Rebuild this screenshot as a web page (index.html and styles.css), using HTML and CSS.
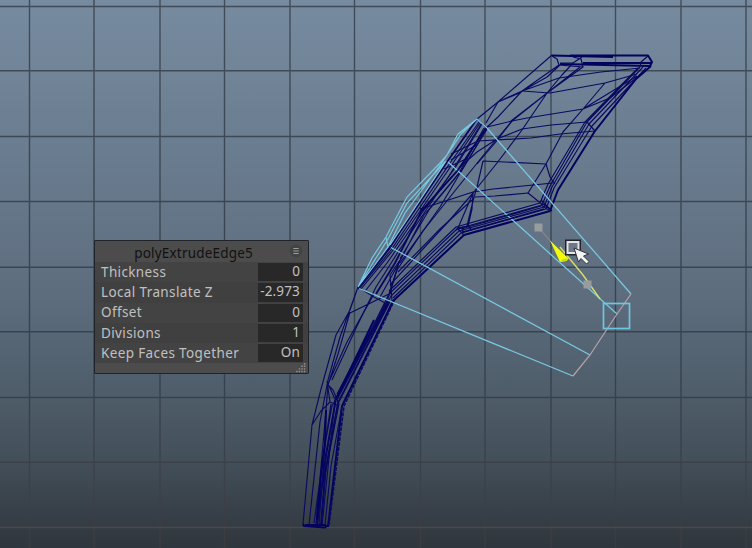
FILE: index.html
```html
<!DOCTYPE html>
<html lang="en">
<head>
<meta charset="utf-8">
<title>Viewport</title>
<link rel="stylesheet" href="styles.css">
</head>
<body>
<main class="viewport">
<svg class="scene" viewBox="0 0 752 548" width="752" height="548">
  <defs>
    <linearGradient id="fade" gradientUnits="userSpaceOnUse" x1="0" y1="0" x2="0" y2="548">
      <stop offset="0" stop-color="#414c58"/><stop offset=".7" stop-color="#35414d"/><stop offset=".88" stop-color="#3c4149"/><stop offset="1" stop-color="#3c3b3f"/>
    </linearGradient>
  </defs>
  <path class="grid" stroke="url(#fade)" d="M29.5 0V548M94 0V548M160 0V548M224.500 0V548M290 0V548M354.500 0V548M420.500 0V548M485 0V548M551 0V548M615.500 0V548M681 0V548M746 0V548M0 6.500H752M0 70.700H752M0 136.500H752M0 201.500H752M0 267.200H752M0 331.700H752M0 397.500H752M0 462.200H752"/>
  <path class="axis" d="M0 527.500H752"/>
  <g class="mesh">
    <path class="heavy" d="M552 55.500L613 57M570 55.500H648L652 62L650 66L560 64M583 63H651"/>
    <path d="M552 55L498 102L477 119M552 56L557 59L559 65L583 67L581 59L573 57M560 63L573 63L582 57M648 56L641 62L640 67"/>
    <path d="M559 65L522 91L498 117L486 128M498 102L522 91L559 78L601 72L640 68M498 102L517 94L547 77L560 65M498 102L486 123"/>
    <path d="M583 67L547 93L512 121L486 152L458 187L423 231L400 263M573 63L562 75L547 93L522 130L497 163L473 193L448 222L422 250L390 285M580 67L551 90L511 121"/>
    <path d="M522 91L550 93L605 83L637 74M605 83L583 109L563 132L546 164L528 193L543 205M583 109L527 118L512 121L487 127M583 109L637 76M583 109L610 98L640 75"/>
    <path d="M587 122L551 125L522 129L497 139L477 152L460 167M595 131L560 134L531 138L478 141L451 154M512 121L495 143L477 164M483 161L546 164L550 177L555 184M553 183L493 189L473 192L433 205L420 209M475 197L495 196L528 193M483 161L477 187L473 201L467 226M473 193L472 209L468 226M473 193L458 228M472 200L440 229L398 272"/>
    <path d="M640 67L587 122L550 186L542 205L457 229L390 293L386 303L335 400L322 526M643 67L589 124L552 187L544 207L459 231L391 296L387 304L337 400M646 68L592 126L554 188L546 209L461 233L393 298M638 68L585 122L548 184L540 203L456 227L389 291"/>
    <path class="heavy" d="M651 66L636 79L595 131L558 190L550 211L464 235L393 301L342 406L328 527"/>
    <path class="band" d="M477 119L447 162L390 247L358 287"/>
    <path class="band" d="M486 128L458 170L422 210L395 263L376 294"/>
    <path d="M550 211L541 205M464 235L457 228L468 226L471 229M595 131L587 122M541 200L552 211M456 230L464 227L462 233"/>
    <path d="M480 123L451 166L394 249L361 289M482 124L455 168L419 217L387 263L366 290M484 128L459 173L424 215L399 263L380 297M487 129L462 170L429 210L400 259M479 122L448 166L391 250L359 289"/>
    <path d="M477 119L487 128L459 175L440 207L423 231L397 270L389 294L373 326L337 394M481 124L449 176L400 249L376 287L357 326L332 380M451 160L478 144M444 169L468 158M387 304L374 297L358 287M392 301L390 275L400 260M350 313L391 293"/>
    <path d="M358 287L350 310L336 335L321 389L312 425L303 524M358 287L340 337L328 380L320 422L309 525M374 294L347 342L328 384L326 410L316 524M389 299L361 349L336 398L324 470L316 525M385 303L353 369L332 406L325 445L319 525M350 312L338 354L328 385L333 390L339 404M327 381L330 402L339 406M312 425L321 411L330 402M328 384L335 399M339 404L326 470L321 526M342 406L331 466L325 525M331 404L321 472L314 523"/>
    <path class="band" d="M387 304L336 399L326 454L317 525M390 301L338 403L325 473L321 525"/>
    <path class="dash" d="M395 299L344 406L329 525"/>
    <path class="heavy" d="M303 524L304 526L325 527.500L328 525M305 525H326M374 320L337 397M326 410L325 443L321 475L317 520"/>
  </g>
  <g class="selection">
    <path d="M477 119L458 134L447 155L440 163L407 197L386 237L372 258L358 287M445 162L407 203L388 239L376 258L358 287M477 119L461 134L441 164L405 213L388 247L374 266L358 287M386 237L388 247M446 161L390 245M477 119L487 128L631 294M448 162L617 314M390 247L590 355M358 288L573 376"/>
    <path class="new-edge" d="M631 294L617 314L590 355L573 376"/>
  </g>
  <path class="over" d="M458 170L422 211M486 128L458 170M390 248L358 289M543 204L551 210M541 206L461 229M544 209L463 232M399 262L390 293M390 248L399 234"/>
  <g class="manipulator">
    <path class="stem" d="M538 227L560 252"/>
    <path class="shaft" d="M560 247L583 275L600 299"/>
    <path class="arrow-light" d="M550 240.500L568.500 258.500L566.500 261L560 262Z"/>
    <path class="arrow-dark" d="M560 262L563 259L568.500 258.500L566.500 261Z"/>
    <path class="handle" d="M534.500 223.500h8v8h-8zM583.500 280.500h8v8h-8z"/>
    <rect class="target" x="603.500" y="303.500" width="26" height="25"/>
  </g>
  <g class="pointer">
    <rect class="outline" x="567.500" y="242" width="11" height="11"/>
    <rect class="square" x="567.500" y="242" width="11" height="11"/>
    <path d="M574 248L588.500 254L583.500 256L589 261.500L586.500 264L581 258.500L578.500 262Z"/>
  </g>
</svg>
<section class="panel">
  <header class="panel-head"><span>polyExtrudeEdge5</span><svg class="menu" viewBox="0 0 14 14"><circle cx="7" cy="7" r="6.500"/><path d="M4.300 4.500H9.700M4.300 7H9.700M4.300 9.500H9.700"/></svg></header>
  <dl class="fields">
    <div class="row"><dt>Thickness</dt><dd>0</dd></div>
    <div class="row"><dt>Local Translate Z</dt><dd>-2.973</dd></div>
    <div class="row"><dt>Offset</dt><dd>0</dd></div>
    <div class="row"><dt>Divisions</dt><dd>1</dd></div>
    <div class="row"><dt>Keep Faces Together</dt><dd>On</dd></div>
  </dl>
  <svg class="grip" viewBox="0 0 10 10"><path d="M8 0h1.500v1.500H8zM8 2.700h1.500v1.500H8zM8 5.400h1.500v1.500H8zM8 8.100h1.500v1.500H8zM5.300 2.700h1.500v1.500H5.300zM5.300 5.400h1.500v1.500H5.300zM5.300 8.100h1.500v1.500H5.300zM2.600 5.400h1.500v1.500H2.600zM2.600 8.100h1.500v1.500H2.600zM0 8.100h1.500v1.500H0z"/></svg>
</section>
</main>
</body>
</html>
```
FILE: styles.css
```css
* { box-sizing: border-box; }
body { margin: 0; overflow: hidden; font-family: "Noto Sans", sans-serif; }
.viewport {
  position: relative;
  width: 752px;
  height: 548px;
  background: linear-gradient(#778ba0 0%, #6a7c8f 28%, #5d6d7e 54%, #4c5a66 75%, #434f59 84%, #333a42 97%, #30363d 100%);
}
.scene { display: block; }
.scene path, .scene rect { fill: none; }
.grid { stroke-width: 1.4; }
.axis { stroke: #49484a; stroke-width: 1.5; }
.selection { stroke: #78c8e2; stroke-width: 1.25; }
.selection .new-edge { stroke: #b6a1a7; }
.mesh { stroke: #0a0a60; stroke-width: 1.15; stroke-linejoin: round; }
.mesh .heavy { stroke: #03035f; stroke-width: 2; }
.mesh .band { stroke: #07075f; stroke-width: 1.8; }
.mesh .dash { stroke-width: 1.6; stroke-dasharray: 4 1; }
.over { stroke: #08085f; stroke-width: 1.3; }
.scene .manipulator .stem { stroke: #9b8f91; }
.scene .manipulator .shaft { stroke: #d8df64; stroke-width: 1.4; }
.scene .manipulator .arrow-light { fill: #f5fb00; }
.scene .manipulator .arrow-dark { fill: #cbd62a; }
.scene .manipulator .handle { fill: #989c9f; }
.scene .manipulator .target { stroke: #70c5df; stroke-width: 1.7; }
.scene .pointer .outline { stroke: #20242d; stroke-width: 5; }
.scene .pointer .square { fill: #707887; stroke: #e3e4e8; stroke-width: 2; }
.scene .pointer path { fill: #f4f4f6; stroke: #30333a; stroke-width: 1; }
.panel {
  position: absolute;
  left: 94px;
  top: 240px;
  width: 215px;
  height: 134px;
  display: flex;
  flex-direction: column;
  border: 1.500px solid #202329;
  border-radius: 1px;
  background: #4c4c4d;
  color: #c0c0c0;
  font-size: 13.5px;
}
.panel-head {
  display: flex;
  align-items: center;
  justify-content: flex-end;
  height: 21px;
  padding: 2px 5px 0 0;
  color: #111;
  letter-spacing: .2px;
}
.panel-head span { line-height: 20px; margin-right: 36px; }
.menu { width: 14px; height: 14px; margin-top: -3px; }
.menu circle { fill: #424344; }
.menu path { stroke: #9a9a9a; stroke-width: 1.1; }
.fields { margin: 0; }
.row {
  display: flex;
  align-items: center;
  justify-content: space-between;
  height: 20.3px;
  padding: 0 5px 0 6px;
  background: #434343;
}
.row:nth-child(even) { background: #404040; }
.row dd {
  width: 45px;
  height: 18.300px;
  margin: 0;
  padding-right: 3px;
  background: #282828;
  line-height: 17px;
  text-align: right;
  letter-spacing: .15px;
}
.row dt { line-height: 18px; margin-top: -1px; letter-spacing: .37px; }
.grip { width: 10px; height: 10px; margin: 0 2px 0 auto; fill: #929292; }
.grip path { fill: #929292; }
```
